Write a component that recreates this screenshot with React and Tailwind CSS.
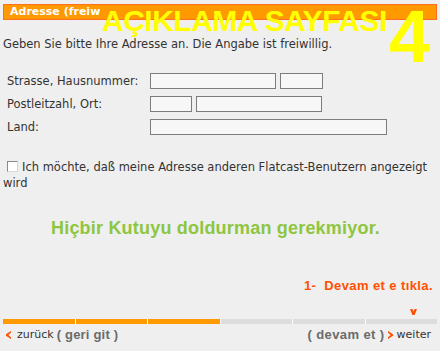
import React from 'react';

const Field = ({ w }) => (
  <div className={`h-[16px] ${w} border border-[#7d7d7d] bg-[#f7f7f7]`} />
);

const App = () => {
  return (
    <div className="relative w-[440px] h-[351px] overflow-hidden bg-[#efefef] font-['DejaVu_Sans',sans-serif] text-[11.5px] text-[#333]">
      <div className="px-[3px] pt-[4px]">

        {/* Orange title bar */}
        <div className="h-[16px] bg-[#ff9900] border border-[#ff6f1f] flex items-center pl-[6px]">
          <span className="w-[90px] overflow-hidden whitespace-nowrap font-bold text-white text-[11px] leading-[14px]">
            Adresse (freiwillig)
          </span>
        </div>

        <p className="mt-[18px] leading-[13px]">
          Geben Sie bitte Ihre Adresse an. Die Angabe ist freiwillig.
        </p>

        {/* Address form */}
        <div className="mt-[22px] pl-[4px] grid grid-cols-[143px_auto] gap-y-[7px] items-center">
          <label className="leading-[16px]">Strasse, Hausnummer:</label>
          <div className="flex gap-[4px]">
            <Field w="w-[126px]" />
            <Field w="w-[43px]" />
          </div>
          <label className="leading-[16px]">Postleitzahl, Ort:</label>
          <div className="flex gap-[4px]">
            <Field w="w-[42px]" />
            <Field w="w-[126px]" />
          </div>
          <label className="leading-[16px]">Land:</label>
          <div className="flex">
            <Field w="w-[237px]" />
          </div>
        </div>

        {/* Checkbox */}
        <p className="mt-[24px] leading-[16px]">
          <span className="inline-block align-[-1px] ml-[4px] mr-[4px] w-[11px] h-[11px] border border-t-[#8a8a8a] border-l-[#8a8a8a] border-r-[#d8d8d8] border-b-[#d8d8d8] bg-white" />
          Ich möchte, daß meine Adresse anderen Flatcast-Benutzern angezeigt
          <br />
          wird
        </p>

        <p className="mt-[27px] pl-[48px] leading-[20px] font-['Liberation_Sans',Arial,sans-serif] font-bold text-[18px] tracking-[0.2px] text-[#8dc63f]">
          Hiçbir Kutuyu doldurman gerekmiyor.
        </p>

        <p className="mt-[40px] pr-[4px] text-right leading-[16px] font-['Liberation_Sans',Arial,sans-serif] font-bold text-[13px] tracking-[0.4px] text-[#ff5000]">
          1-&nbsp; Devam et e tıkla.
        </p>

        <div className="mt-[15px] flex justify-end pr-[20px]">
          <svg width="7" height="6" viewBox="0 0 7 6">
            <polygon points="0,0 2.4,0 3.5,2.6 4.6,0 7,0 4.6,6 2.4,6" fill="#ff5000" />
          </svg>
        </div>

        {/* Progress */}
        <div className="mt-[4px] flex gap-[1px] bg-white h-[5px]">
          <div className="flex-1 bg-[#ff9900]" />
          <div className="flex-1 bg-[#ff9900]" />
          <div className="flex-1 bg-[#ff9900]" />
          <div className="flex-1 bg-[#dddddd]" />
          <div className="flex-1 bg-[#dddddd]" />
          <div className="flex-1 bg-[#dddddd]" />
        </div>

        {/* Navigation */}
        <div className="mt-[4px] flex items-center justify-between leading-[14px] text-[11px]">
          <div className="flex items-center pl-[3px]">
            <svg width="5" height="8" viewBox="0 0 5 8" className="mr-[6px]">
              <polygon points="5,0 5,1.8 2.3,4 5,6.2 5,8 0,4.8 0,3.2" fill="#ff5000" />
            </svg>
            <span>zurück</span>
            <span className="ml-[3px] font-['Liberation_Sans',Arial,sans-serif] font-bold text-[13px] tracking-[0.2px] text-[#6b6b6b]">
              ( geri git )
            </span>
          </div>
          <div className="flex items-center pr-[6px]">
            <span className="mr-[3px] font-['Liberation_Sans',Arial,sans-serif] font-bold text-[13px] tracking-[0.4px] text-[#6b6b6b]">
              ( devam et )
            </span>
            <svg width="5" height="8" viewBox="0 0 5 8" className="mr-[4px]">
              <polygon points="0,0 0,1.8 2.7,4 0,6.2 0,8 5,4.8 5,3.2" fill="#ff5000" />
            </svg>
            <span>weiter</span>
          </div>
        </div>
      </div>

      {/* Yellow overlay caption */}
      <div className="absolute left-[102px] top-[6px] whitespace-nowrap font-['Liberation_Sans',Arial,sans-serif] font-bold text-[30px] leading-[30px] tracking-[-0.5px] text-[#ffff00]">
        AÇIKLAMA SAYFASI
      </div>
      <div className="absolute left-[389px] top-[0px] font-['Liberation_Sans',Arial,sans-serif] font-bold text-[74px] leading-[74px] text-[#ffff00]">
        4
      </div>
    </div>
  );
};

export default App;
